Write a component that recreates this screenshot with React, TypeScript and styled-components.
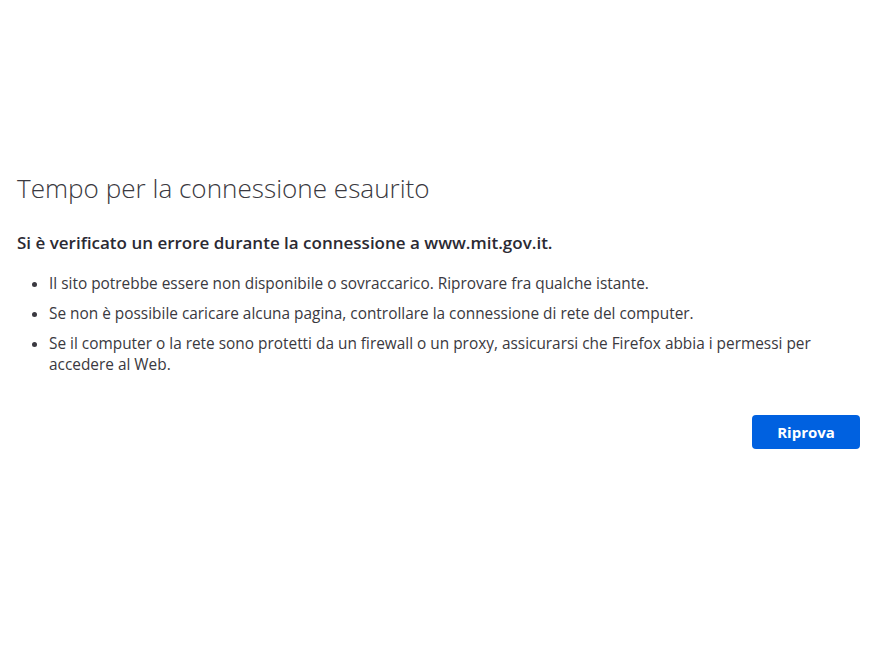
import React from "react";
import styled, { createGlobalStyle } from "styled-components";

const Global = createGlobalStyle`
  html, body { margin: 0; padding: 0; background: #ffffff; }
  body { font-family: "Open Sans", "Noto Sans", sans-serif; color: #15141a; }
`;

const Page = styled.main`
  box-sizing: border-box;
  width: 871px;
  height: 653px;
  padding: 172px 11px 0 17px;
`;

const Title = styled.h1`
  margin: 0;
  font-size: 26.1px;
  font-weight: 300;
  line-height: 32px;
  color: #3a3940;
`;

const Subtitle = styled.p`
  margin: 27px 0 0;
  font-size: 17px;
  font-weight: 600;
  line-height: 24px;
  color: #2b2a33;
`;

const List = styled.ul`
  margin: 18px 0 0;
  padding: 0 0 0 32px;
`;

const Item = styled.li`
  font-size: 15.4px;
  line-height: 21px;
  color: #3a3940;
  margin-bottom: 9px;
  &:last-child { margin-bottom: 0; }
`;

const Actions = styled.div`
  display: flex;
  justify-content: flex-end;
  margin-top: 40px;
`;

const Button = styled.button`
  width: 108px;
  height: 34px;
  border: none;
  border-radius: 4px;
  background: #0061e0;
  color: #ffffff;
  font-family: "Open Sans", "Noto Sans", sans-serif;
  font-size: 15px;
  font-weight: 700;
  cursor: pointer;
`;

export default function App() {
  return (
    <>
      <Global />
      <Page>
        <Title>Tempo per la connessione esaurito</Title>
        <Subtitle>Si è verificato un errore durante la connessione a www.mit.gov.it.</Subtitle>
        <List>
          <Item>Il sito potrebbe essere non disponibile o sovraccarico. Riprovare fra qualche istante.</Item>
          <Item>Se non è possibile caricare alcuna pagina, controllare la connessione di rete del computer.</Item>
          <Item>Se il computer o la rete sono protetti da un firewall o un proxy, assicurarsi che Firefox abbia i permessi per accedere al Web.</Item>
        </List>
        <Actions>
          <Button>Riprova</Button>
        </Actions>
      </Page>
    </>
  );
}
